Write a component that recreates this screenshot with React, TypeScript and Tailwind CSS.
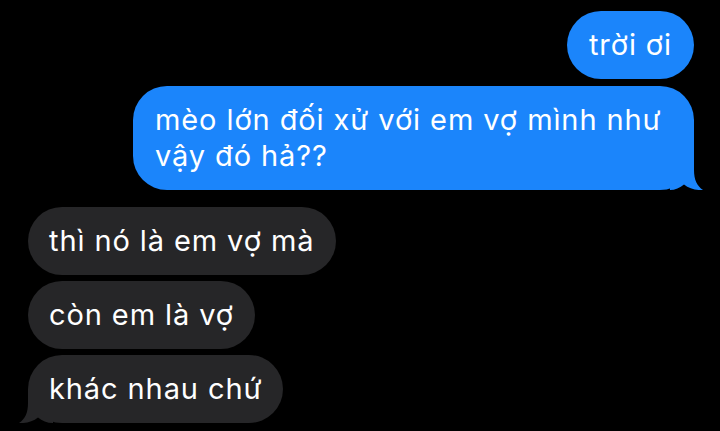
const BLUE = "#1b85fb";
const GREY = "#262628";

function TailRight() {
  return (
    <svg
      className="absolute bottom-0 right-[-10px]"
      width="34"
      height="34"
      viewBox="0 0 34 34"
    >
      <path
        d="M0 0 H24 V14 C24 24 27 30 33 34 C26 34.5 19 32.5 14 28.5 C10 32 5 34 0 34 Z"
        fill={BLUE}
      />
    </svg>
  );
}

function TailLeft() {
  return (
    <svg
      className="absolute bottom-0 left-[-9px]"
      width="34"
      height="34"
      viewBox="0 0 34 34"
    >
      <path
        d="M34 0 H9 V14 C9 24 6 30 0 34 C7 34.5 14 32.5 19 28.5 C23 32 28 34 34 34 Z"
        fill={GREY}
      />
    </svg>
  );
}

function Sent({ children, tail, className = "" }: { children: React.ReactNode; tail?: boolean; className?: string }) {
  return (
    <div className={`relative self-end rounded-[34px] bg-[#1b85fb] px-[22px] py-[16px] ${className}`}>
      {tail && <TailRight />}
      <div className="relative">{children}</div>
    </div>
  );
}

function Received({ children, tail }: { children: React.ReactNode; tail?: boolean }) {
  return (
    <div className="relative self-start rounded-[34px] bg-[#262628] px-[21px] py-[16px]">
      {tail && <TailLeft />}
      <div className="relative">{children}</div>
    </div>
  );
}

export default function App() {
  return (
    <div
      className="flex h-[431px] w-[720px] flex-col overflow-hidden bg-black pl-[28px] pr-[26px] pt-[11px] text-[29px] leading-[36px] tracking-[0.9px] text-white"
      style={{ fontFamily: "Inter, 'Noto Sans', sans-serif" }}
    >
      <div className="flex flex-col gap-[7px]">
        <Sent>trời ơi</Sent>
        <Sent tail className="w-[561px] rounded-[30px]">
          mèo lớn đối xử với em vợ mình như
          <br />
          vậy đó hả??
        </Sent>
      </div>
      <div className="mt-[17px] flex flex-col gap-[6px]">
        <Received>thì nó là em vợ mà</Received>
        <Received>còn em là vợ</Received>
        <Received tail>khác nhau chứ</Received>
      </div>
    </div>
  );
}
